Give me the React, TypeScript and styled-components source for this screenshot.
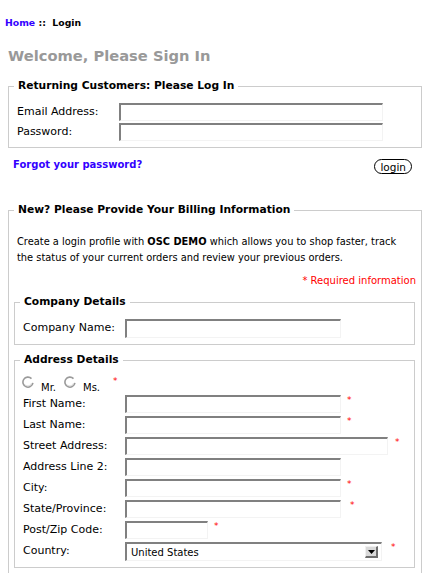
import React from "react";
import styled, { createGlobalStyle } from "styled-components";

const GlobalStyle = createGlobalStyle`
  html, body {
    margin: 0;
    padding: 0;
    background: #ffffff;
  }
  body {
    font-family: "DejaVu Sans", Verdana, sans-serif;
    color: #000000;
  }
`;

const Page = styled.div`
  width: 414px;
  padding: 16px 12px 0 8px;
`;

const Breadcrumb = styled.div`
  margin-left: -3px;
  font-size: 9.3px;
  font-weight: bold;
  line-height: 14px;

  a {
    color: #3300ff;
    text-decoration: none;
  }
`;

const Heading = styled.h1`
  margin: 16px 0 0;
  font-size: 14.7px;
  line-height: 20px;
  color: #999999;
`;

const Fieldset = styled.fieldset<{ $nested?: boolean }>`
  margin: ${(p) => (p.$nested ? "0 0 0 -3px" : "0")};
  padding: 0 5px 6px 8px;
  border: 1px solid #cccccc;
  min-width: 0;
`;

const LoginFieldset = styled(Fieldset)`
  margin-top: 13px;
`;

const Legend = styled.legend`
  margin-left: -3px;
  padding: 0 4px;
  font-size: 10.7px;
  font-weight: bold;
  line-height: 14px;
`;

const FieldGrid = styled.div<{ $gap: number; $top: number }>`
  display: grid;
  grid-template-columns: 102px 1fr;
  row-gap: ${(p) => p.$gap}px;
  margin-top: ${(p) => p.$top}px;
  align-items: start;
`;

const Label = styled.label`
  font-size: 11px;
  line-height: 18px;
  white-space: nowrap;
`;

const FieldCell = styled.div`
  display: flex;
  align-items: flex-start;
`;

const TextInput = styled.input<{ $w: number; $h?: number }>`
  box-sizing: border-box;
  width: ${(p) => p.$w}px;
  height: ${(p) => p.$h ?? 18}px;
  margin: 0;
  padding: 0 3px;
  border-style: solid;
  border-width: 2px 1px 1px 2px;
  border-color: #808080 #f3f3f3 #f3f3f3 #808080;
  background: #ffffff;
  font-family: inherit;
  font-size: 11px;
  outline: none;
`;

const Star = styled.span<{ $x?: number }>`
  margin-left: ${(p) => p.$x ?? 6}px;
  color: #ff0000;
  font-size: 9px;
  line-height: 10px;
`;

const ActionRow = styled.div`
  display: flex;
  justify-content: space-between;
  align-items: flex-start;
  margin-top: 10px;
  padding: 0 10px 0 5px;
`;

const ForgotLink = styled.a`
  font-size: 10px;
  font-weight: bold;
  line-height: 12px;
  margin-top: 1px;
  color: #3300ff;
  text-decoration: none;
`;

const LoginButton = styled.button`
  box-sizing: border-box;
  height: 15px;
  margin-top: 1px;
  padding: 0 5px;
  border: 1px solid #000000;
  border-radius: 8px;
  background: #ffffff;
  font-family: inherit;
  font-size: 10.5px;
  line-height: 12px;
  color: #000000;
`;

const BillingFieldset = styled(Fieldset)`
  margin-top: 29px;
`;

const Intro = styled.p`
  margin: 17px 0 0;
  font-size: 9.85px;
  line-height: 16px;
  white-space: nowrap;

  strong {
    font-weight: bold;
  }
`;

const Required = styled.div`
  margin-top: 7px;
  text-align: right;
  color: #ff0000;
  font-size: 10px;
  line-height: 16px;
`;

const CompanyFieldset = styled(Fieldset)`
  margin-top: 6px;
  margin-right: 1px;
`;

const AddressFieldset = styled(Fieldset)`
  margin-top: 8px;
  margin-right: 1px;
`;

const GenderRow = styled.div`
  display: flex;
  align-items: flex-start;
  height: 17px;
  margin-top: 9px;
  margin-left: -1px;
  font-size: 10px;
`;

const RadioOption = styled.label`
  display: flex;
  align-items: flex-start;
  gap: 7px;
  margin-right: 8px;
  line-height: 12px;

  span {
    margin-top: 6px;
  }
`;

const SelectBox = styled.div`
  box-sizing: border-box;
  display: flex;
  align-items: center;
  justify-content: space-between;
  width: 257px;
  height: 19px;
  padding: 0 3px 0 4px;
  border-style: solid;
  border-width: 2px 1px 1px 2px;
  border-color: #808080 #f3f3f3 #f3f3f3 #808080;
  font-size: 10px;
`;

const SelectArrow = styled.div`
  box-sizing: border-box;
  width: 13px;
  height: 12px;
  display: flex;
  align-items: center;
  justify-content: center;
  background: #d9d9d9;
  border-style: solid;
  border-width: 1px 2px 2px 1px;
  border-color: #f0f0f0 #6e6e6e #6e6e6e #f0f0f0;
`;

const Radio = () => (
  <svg width="12" height="12" viewBox="0 0 12 12">
    <path
      d="M9.5 2.6 A5 5 0 1 0 10.9 6.8"
      fill="none"
      stroke="#9a9a9a"
      strokeWidth="1.6"
    />
    <path
      d="M3.2 9 A4 4 0 0 0 9.6 7"
      fill="none"
      stroke="#dddddd"
      strokeWidth="1"
    />
  </svg>
);

const Caret = () => (
  <svg width="7" height="4" viewBox="0 0 7 4">
    <path d="M0 0 H7 L3.5 4 Z" fill="#000000" />
  </svg>
);

type Field = {
  label: string;
  width: number;
  star?: number;
};

const addressFields: Field[] = [
  { label: "First Name:", width: 216, star: 6 },
  { label: "Last Name:", width: 216, star: 6 },
  { label: "Street Address:", width: 263, star: 7 },
  { label: "Address Line 2:", width: 216 },
  { label: "City:", width: 216, star: 6 },
  { label: "State/Province:", width: 216, star: 9 },
  { label: "Post/Zip Code:", width: 83, star: 6 },
];

export default function App() {
  return (
    <Page>
      <GlobalStyle />
      <Breadcrumb>
        <a href="#">Home</a> ::&nbsp; Login
      </Breadcrumb>
      <Heading>Welcome, Please Sign In</Heading>

      <LoginFieldset>
        <Legend>Returning Customers: Please Log In</Legend>
        <FieldGrid $gap={2} $top={10}>
          <Label>Email Address:</Label>
          <FieldCell>
            <TextInput $w={264} />
          </FieldCell>
          <Label>Password:</Label>
          <FieldCell>
            <TextInput $w={264} type="password" />
          </FieldCell>
        </FieldGrid>
      </LoginFieldset>

      <ActionRow>
        <ForgotLink href="#">Forgot your password?</ForgotLink>
        <LoginButton>login</LoginButton>
      </ActionRow>

      <BillingFieldset>
        <Legend>New? Please Provide Your Billing Information</Legend>
        <Intro>
          Create a login profile with <strong>OSC DEMO</strong> which allows
          you to shop faster, track
          <br />
          the status of your current orders and review your previous orders.
        </Intro>
        <Required>* Required information</Required>

        <CompanyFieldset $nested>
          <Legend>Company Details</Legend>
          <FieldGrid $gap={2} $top={10}>
            <Label>Company Name:</Label>
            <FieldCell>
              <TextInput $w={216} $h={19} />
            </FieldCell>
          </FieldGrid>
        </CompanyFieldset>

        <AddressFieldset $nested>
          <Legend>Address Details</Legend>
          <GenderRow>
            <RadioOption>
              <Radio />
              <span>Mr.</span>
            </RadioOption>
            <RadioOption>
              <Radio />
              <span>Ms.</span>
            </RadioOption>
            <Star $x={5}>*</Star>
          </GenderRow>
          <FieldGrid $gap={3} $top={2}>
            {addressFields.map((f) => (
              <React.Fragment key={f.label}>
                <Label>{f.label}</Label>
                <FieldCell>
                  <TextInput $w={f.width} />
                  {f.star !== undefined && <Star $x={f.star}>*</Star>}
                </FieldCell>
              </React.Fragment>
            ))}
            <Label>Country:</Label>
            <FieldCell>
              <SelectBox>
                <span>United States</span>
                <SelectArrow>
                  <Caret />
                </SelectArrow>
              </SelectBox>
              <Star $x={9}>*</Star>
            </FieldCell>
          </FieldGrid>
        </AddressFieldset>
      </BillingFieldset>
    </Page>
  );
}
